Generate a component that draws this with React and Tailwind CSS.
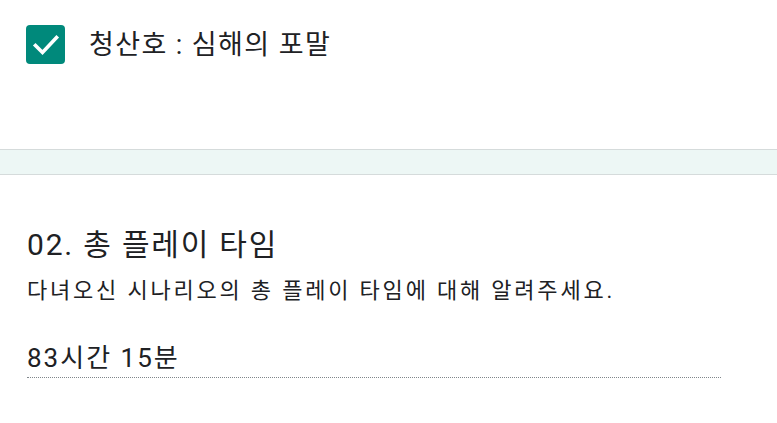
const font = { fontFamily: 'Roboto, "Noto Sans CJK KR", sans-serif' };

// white tick inside the checked box
const Tick = () => (
  <svg viewBox="0 0 39 39" className="w-[39px] h-[39px]">
    <path d="M9.5 20.5 L16.5 27.5 L30.5 12.5" fill="none" stroke="#fff" strokeWidth="3.6" strokeLinecap="square" />
  </svg>
);

export default function App() {
  return (
    <div className="w-[777px] h-[423px] bg-white text-[#202124] overflow-hidden" style={font}>
      {/* checked answer */}
      <div className="h-[149px] pl-[26px] pt-[25px]">
        <div className="flex items-center gap-[24px]">
          <span className="w-[39px] h-[39px] rounded-[4px] bg-[#00897b] flex items-center justify-center">
            <Tick />
          </span>
          <span className="text-[27px] leading-[36px] tracking-[1.4px]">청산호 : 심해의 포말</span>
        </div>
      </div>

      {/* section divider */}
      <div className="h-[26px] bg-[#edf7f5] border-y border-[#d5dbdb]" />

      {/* question */}
      <div className="pl-[27px] pt-[50px]">
        <h2 className="text-[30px] leading-[40px] tracking-[1.8px]">02. 총 플레이 타임</h2>
        <p className="text-[22px] leading-[32px] mt-[10px] tracking-[2.8px]">다녀오신 시나리오의 총 플레이 타임에 대해 알려주세요.</p>
        <div className="w-[694px] mt-[34px] border-b border-dotted border-[#80868b] pb-[2px]">
          <span className="text-[26px] leading-[34px] tracking-[2px]">83시간 15분</span>
        </div>
      </div>
    </div>
  );
}
